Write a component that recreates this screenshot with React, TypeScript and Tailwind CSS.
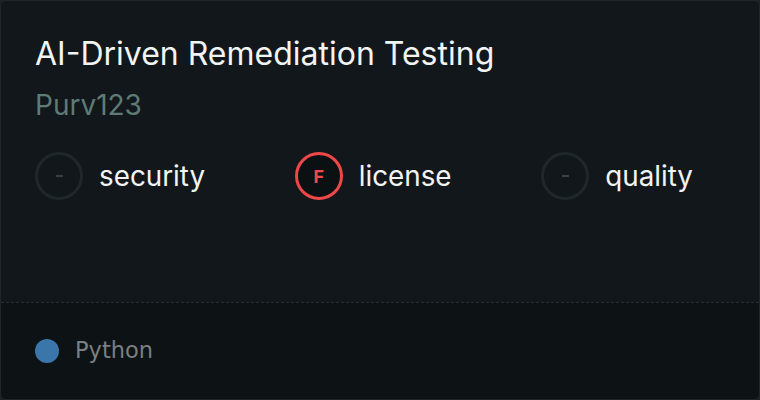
export default function App() {
  const items = [
    { label: "security", grade: null },
    { label: "license", grade: "F" },
    { label: "quality", grade: null },
  ];
  return (
    <div className="w-[760px] h-[400px] bg-[#1c2326]" style={{ fontFamily: "Inter, 'Noto Sans', sans-serif" }}>
      <div className="w-full h-full rounded-md border border-[#1f2629] bg-[#11171a] overflow-hidden flex flex-col">
        <div className="flex-1 px-[34px] pt-[33px]">
          <div className="text-[32px] leading-[40px] text-[#f2f4f4]">AI-Driven Remediation Testing</div>
          <div className="mt-[13px] text-[28px] leading-[36px] text-[#5f7b76]">Purv123</div>
          <div className="mt-[29px] mr-[32px] flex items-center justify-between">
            {items.map((it) => (
              <div key={it.label} className="flex items-center gap-[16px]">
                {it.grade ? (
                  <div className="w-[48px] h-[48px] rounded-full border-[3px] border-[#f04848] bg-[#0b1012] flex items-center justify-center text-[#f04848] text-[18px] font-bold">
                    {it.grade}
                  </div>
                ) : (
                  <div className="w-[48px] h-[48px] rounded-full border-[3px] border-[#20272a] flex items-center justify-center">
                    <div className="w-[7px] h-[2px] bg-[#3a4043]" />
                  </div>
                )}
                <div className="text-[27.8px] leading-[36px] text-[#f2f4f4]">{it.label}</div>
              </div>
            ))}
          </div>
        </div>
        <div className="h-[97px] border-t border-dashed border-[#262d30] bg-[#0d1215] flex items-center px-[34px] gap-[16px]">
          <div className="w-[24px] h-[24px] rounded-full bg-[#3a76a9]" />
          <div className="text-[22.5px] text-[#7b7f81]" style={{ fontFamily: "'DejaVu Sans', sans-serif" }}>Python</div>
        </div>
      </div>
    </div>
  );
}
